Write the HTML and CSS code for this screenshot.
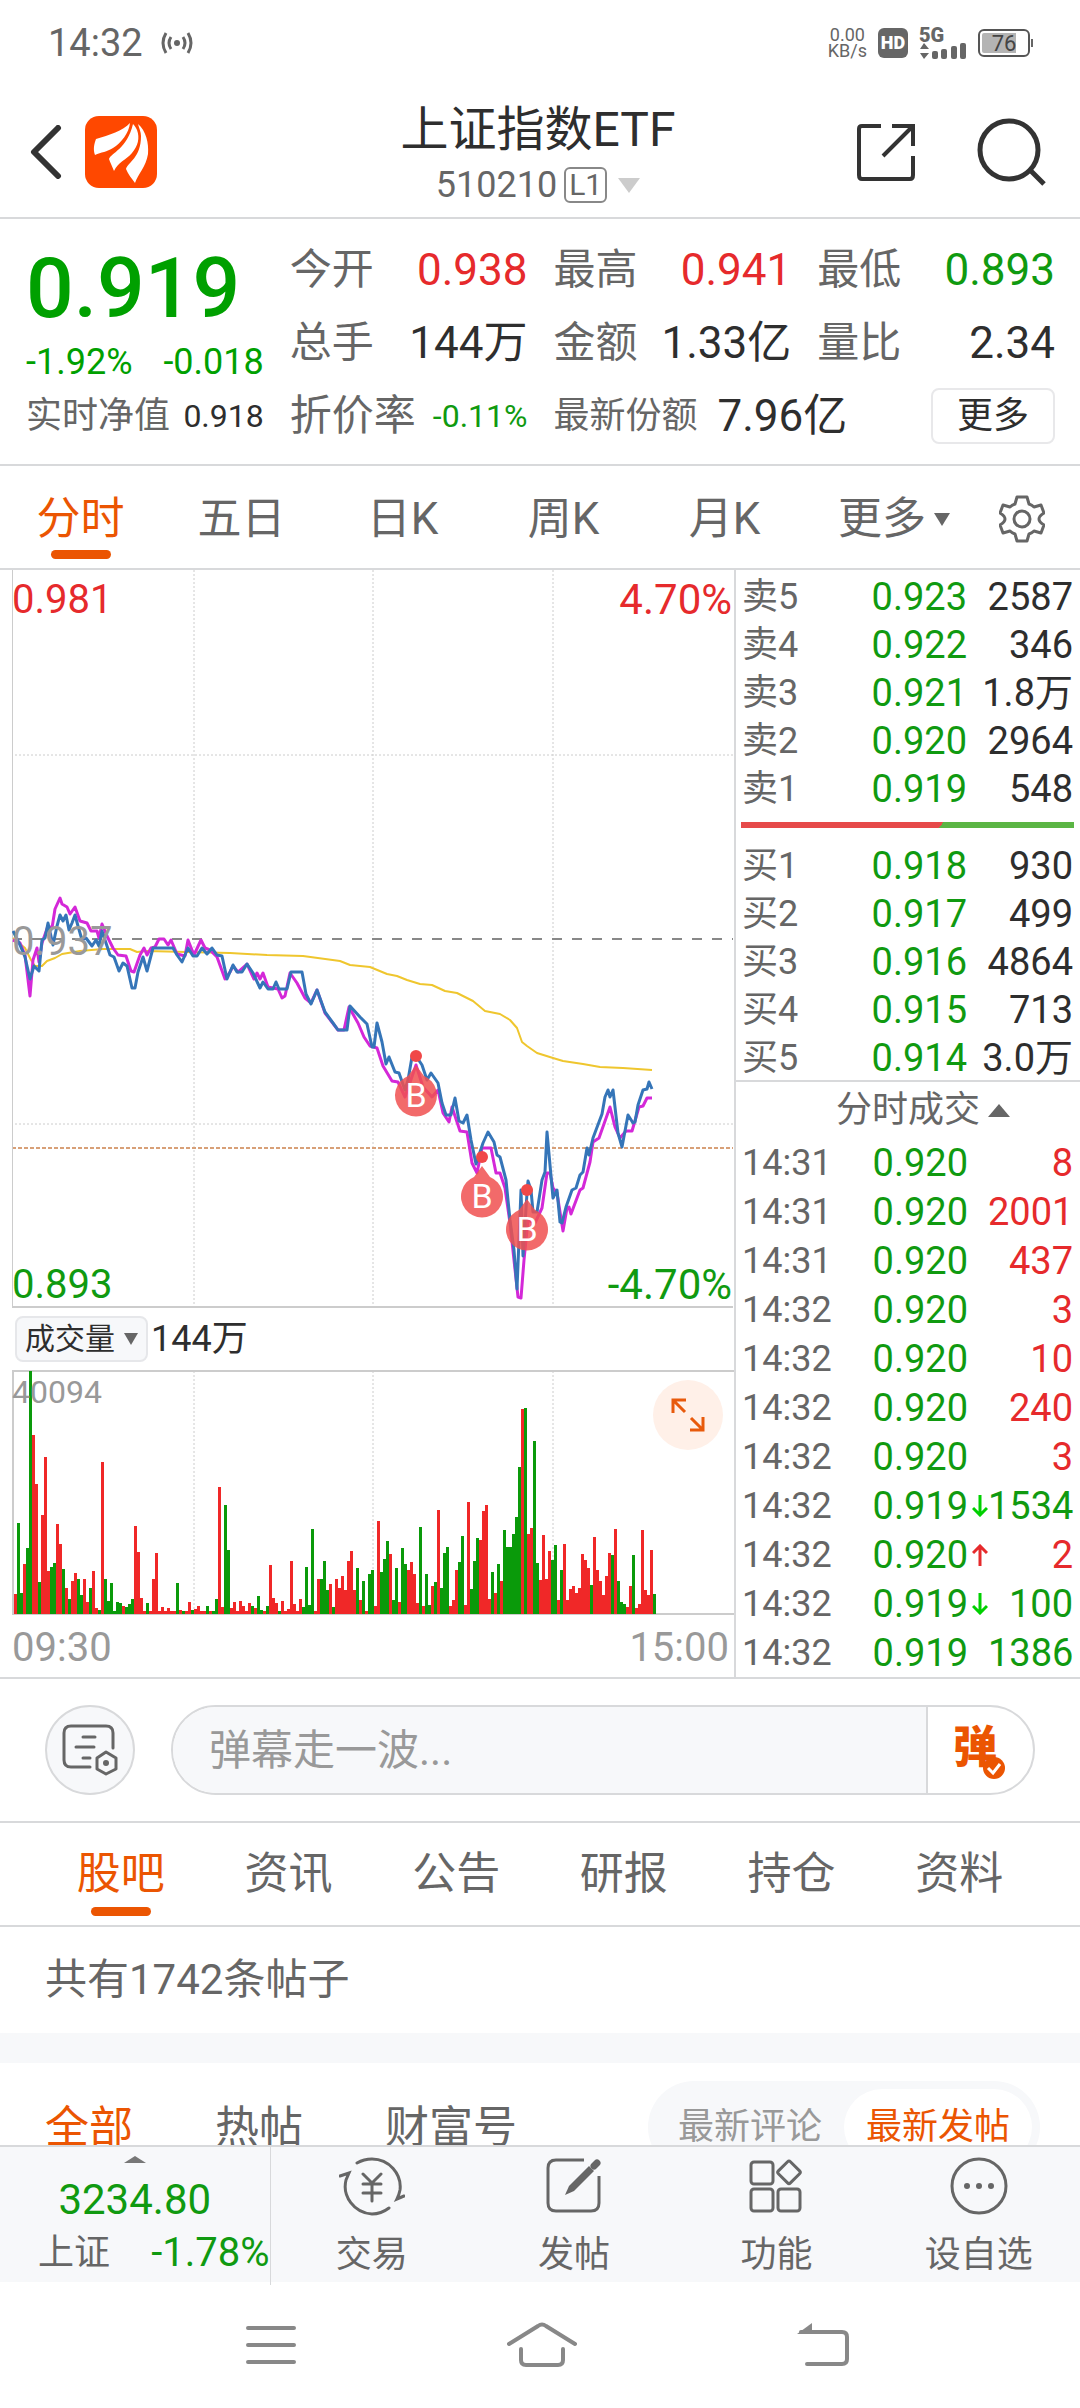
FILE: index.html
```html
<!DOCTYPE html>
<html lang="zh-CN">
<head>
<meta charset="utf-8">
<meta name="viewport" content="width=device-width, initial-scale=1">
<title>上证指数ETF 510210</title>
<link rel="stylesheet" href="styles.css">
</head>
<body>
<div class="status">
  <span class="status-time">14:32</span>
  <svg class="status-cast" width="32" height="22" viewBox="0 0 32 22" fill="none" stroke="#666" stroke-width="3"><circle cx="16" cy="11" r="3" fill="#666" stroke="none"/><path d="M10 5Q6 11 10 17M22 5Q26 11 22 17M5 1Q-1 11 5 21M27 1Q33 11 27 21"/></svg>
  <div class="status-right">
    <div class="status-net"><span>0.00</span><span>KB/s</span></div>
    <span class="status-hd">HD</span>
    <div class="status-signal">
      <span>5G</span>
      <svg width="48" height="16" viewBox="0 0 48 16" fill="#666"><path d="M1 6L5 0L10 6ZM1 10H10L5 16Z"/><rect x="13" y="8" width="6" height="8" rx="2"/><rect x="22" y="6" width="6" height="10" rx="2"/><rect x="32" y="3" width="6" height="13" rx="2"/><rect x="41" y="0" width="6" height="16" rx="2"/></svg>
    </div>
    <span class="status-battery">76</span>
  </div>
</div>

<header class="header">
  <div class="header-side">
    <button class="icon-btn" aria-label="返回"><svg width="32" height="54" viewBox="0 0 32 54" fill="none" stroke="#333" stroke-width="6" stroke-linecap="round" stroke-linejoin="round"><path d="M28 3L4 27L28 51"/></svg></button>
    <svg class="logo" width="72" height="72" viewBox="0 0 72 72"><rect width="72" height="72" rx="14" fill="#ff4800"/><g fill="#fff"><path d="M10 39C8 34 9 28 11 23C24 19 38 15 45 7C44 17 36 27 28 32C22 36 16 36 10 39Z"/><path d="M29 55C27 50 25 46 24 43C26 37 42 33 48 8C50 10 51 12 52 14C55 22 53 30 47 37C41 44 33 46 29 55Z"/><path d="M50 67C47 63 43 58 41 53C43 46 56 42 56 20C56 16 54 12 53 8C61 15 64 27 63 38C61 51 53 58 50 67Z"/></g></svg>
  </div>
  <div class="header-title">
    <h1>上证指数ETF</h1>
    <button class="code">510210<span class="level">L1</span><svg width="22" height="15" viewBox="0 0 22 15"><path d="M0 0H22L11 15Z" fill="#ccc"/></svg></button>
  </div>
  <div class="header-side header-actions">
    <button class="icon-btn" aria-label="分享"><svg width="60" height="60" viewBox="0 0 60 60" fill="none" stroke="#333" stroke-width="4"><path d="M25 4H6Q3 4 3 7V53Q3 57 6 57H54Q57 57 57 53V34M36 4H57V24M56 5L27 34"/></svg></button>
    <button class="icon-btn" aria-label="搜索"><svg width="70" height="70" viewBox="0 0 70 70" fill="none" stroke="#333" stroke-width="5"><circle cx="33" cy="33" r="29"/><path d="M54 53L68 67"/></svg></button>
  </div>
</header>

<section class="quote">
  <div class="quote-main">
    <strong>0.919</strong>
    <div class="quote-change"><span>-1.92%</span><span>-0.018</span></div>
  </div>
  <div class="stat"><span>今开</span><b class="up">0.938</b></div>
  <div class="stat"><span>最高</span><b class="up">0.941</b></div>
  <div class="stat"><span>最低</span><b class="down">0.893</b></div>
  <div class="stat"><span>总手</span><b>144万</b></div>
  <div class="stat"><span>金额</span><b>1.33亿</b></div>
  <div class="stat"><span>量比</span><b>2.34</b></div>
  <div class="stat"><span class="small">实时净值</span><b class="small-num">0.918</b></div>
  <div class="stat"><span>折价率</span><b class="small-num down">-0.11%</b></div>
  <div class="stat stat-wide"><span class="small">最新份额</span><b>7.96亿</b><button class="more">更多</button></div>
</section>

<nav class="periods">
  <button class="tab active">分时</button>
  <button class="tab">五日</button>
  <button class="tab">日K</button>
  <button class="tab">周K</button>
  <button class="tab">月K</button>
  <button class="tab tab-more">更多<svg width="16" height="13" viewBox="0 0 16 13"><path d="M0 0H16L8 13Z" fill="#666"/></svg></button>
  <button class="tab tab-gear" aria-label="设置"><svg width="46" height="48" viewBox="0 0 46 48" fill="none" stroke="#666" stroke-width="3" stroke-linejoin="round"><path d="M18 2H28L30 9Q33 10 35 12L42 10L45 18Q40 21 40 24Q40 27 45 30L42 38L35 36Q33 38 30 39L28 46H18L16 39Q13 38 11 36L4 38L1 30Q6 27 6 24Q6 21 1 18L4 10L11 12Q13 10 16 9Z"/><circle cx="23" cy="24" r="8"/></svg></button>
</nav>

<main class="content">
  <section class="market">
    <div class="charts">
      <div class="plot">
        <svg class="plot-svg" viewBox="12 570 722 738" fill="none">
          <g stroke="#ccc" stroke-dasharray="2 2"><path d="M194 570V1307M373 570V1307M553 570V1307M15 755H733M15 1124H733"/></g>
          <path d="M12 939H733" stroke="#888" stroke-width="2" stroke-dasharray="10 10"/>
          <path d="M12 1148H733" stroke="#d8a078" stroke-width="2" stroke-dasharray="4 2"/>
          <path d="M12 570V1307H733" stroke="#ccc" stroke-width="2"/>
          <g stroke-linejoin="round">
          <polyline stroke="#efc62e" stroke-width="2" points="13,938 25,948 31,960 35,966 42,966 47,961 55,958 62,954 80,951 103,949 130,949 137,952 147,951 187,952 230,953 267,955 303,956 340,961 350,965 370,967 387,974 397,976 407,980 420,984 432,985 445,991 457,993 473,1001 485,1011 500,1014 510,1020 517,1028 522,1042 527,1046 537,1053 553,1058 563,1061 583,1064 600,1067 623,1068 652,1070"/>
          <polyline stroke="#d428d8" stroke-width="3" points="13,940 20,943 25,955 30,996 33,960 37,948 39,962 42,943 48,926 52,928 55,909 60,898 62,904 67,907 70,914 75,907 80,921 87,923 91,931 97,931 99,938 102,924 107,936 113,948 118,955 126,956 131,971 134,972 140,955 144,948 147,955 151,948 155,947 159,939 164,939 168,945 171,940 177,954 185,956 188,940 194,955 201,940 205,948 210,950 217,957 225,979 230,972 233,966 238,972 247,964 254,979 257,973 260,979 263,973 268,987 278,989 282,998 285,996 290,973 297,983 305,998 311,1003 317,990 325,1013 338,1030 344,1030 349,1007 358,1023 364,1037 370,1046 377,1048 383,1066 392,1081 398,1082 405,1097 416,1065 423,1087 432,1097 438,1090 443,1113 449,1122 452,1107 460,1131 467,1132 472,1163 477,1173 482,1148 491,1148 496,1173 500,1173 505,1188 510,1223 518,1297 521,1298 524,1260 528,1220 535,1223 542,1208 547,1173 550,1173 553,1188 557,1193 563,1231 567,1208 569,1207 571,1214 580,1190 583,1188 590,1162 593,1142 599,1138 610,1107 615,1127 620,1138 626,1131 632,1131 639,1107 643,1106 647,1098 652,1098"/>
          <polyline stroke="#3575b8" stroke-width="3" points="13,931 20,945 25,957 30,979 34,966 39,971 42,940 45,938 48,923 53,945 57,926 60,915 63,921 66,915 69,930 72,923 75,915 78,926 82,940 86,938 92,946 96,940 99,946 102,931 106,943 110,955 114,957 119,971 123,963 127,966 132,988 135,988 138,972 143,957 147,971 153,948 173,948 177,955 182,962 188,948 193,956 197,956 202,948 207,954 212,948 217,955 222,956 227,979 233,965 237,972 242,972 247,964 253,973 260,988 263,982 268,989 273,989 276,982 279,989 287,989 291,972 302,972 306,994 311,1004 317,990 325,1012 333,1023 338,1030 347,1030 350,1006 360,1017 367,1024 372,1047 374,1047 377,1023 382,1042 386,1064 389,1057 395,1072 399,1073 405,1090 408,1080 412,1057 416,1056 422,1065 427,1080 431,1073 438,1083 442,1103 446,1115 451,1115 455,1098 459,1121 463,1123 467,1115 471,1140 476,1164 480,1152 483,1143 488,1132 494,1142 497,1155 500,1157 506,1180 510,1220 514,1250 517,1289 521,1190 523,1256 527,1193 528,1181 531,1190 533,1212 537,1212 542,1180 545,1172 547,1132 553,1198 557,1190 560,1222 562,1223 566,1207 572,1190 576,1188 580,1175 583,1172 587,1148 589,1155 593,1138 602,1114 605,1097 608,1090 610,1097 613,1090 618,1133 622,1147 628,1115 633,1123 635,1122 638,1105 643,1090 647,1089 649,1082 652,1089"/>
          </g>
          <g id="marks"></g>
        </svg>
        <span class="mark-label top-left up">0.981</span>
        <span class="mark-label top-right up">4.70%</span>
        <span class="mark-label mid-left">0.937</span>
        <span class="mark-label bottom-left down">0.893</span>
        <span class="mark-label bottom-right down">-4.70%</span>
      </div>
      <div class="indicator">
        <button class="indicator-btn">成交量<svg width="14" height="12" viewBox="0 0 14 12"><path d="M0 0H14L7 12Z" fill="#666"/></svg></button>
        <span>144万</span>
      </div>
      <div class="plot">
        <svg class="plot-svg" viewBox="12 1370 722 245" fill="none">
          <path d="M194 1371V1614M373 1371V1614M553 1371V1614" stroke="#ccc" stroke-dasharray="2 2"/>
          <path d="M734 1371H13V1614H734" stroke="#ccc" stroke-width="2"/>
          <g id="bars"></g>
        </svg>
        <span class="volume-max">40094</span>
        <button class="expand" aria-label="全屏"><svg width="38" height="38" viewBox="0 0 38 38" fill="none" stroke="#e85a0c" stroke-width="3"><path d="M4 17V4H17M4 4L16 16M34 21V34H21M34 34L22 22"/></svg></button>
      </div>
      <div class="axis"><span>09:30</span><span>15:00</span></div>
    </div>
    <aside class="book">
      <table class="orders">
        <tr><th>卖5</th><td class="down">0.923</td><td>2587</td></tr>
        <tr><th>卖4</th><td class="down">0.922</td><td>346</td></tr>
        <tr><th>卖3</th><td class="down">0.921</td><td>1.8万</td></tr>
        <tr><th>卖2</th><td class="down">0.920</td><td>2964</td></tr>
        <tr><th>卖1</th><td class="down">0.919</td><td>548</td></tr>
      </table>
      <div class="ratio"></div>
      <table class="orders">
        <tr><th>买1</th><td class="down">0.918</td><td>930</td></tr>
        <tr><th>买2</th><td class="down">0.917</td><td>499</td></tr>
        <tr><th>买3</th><td class="down">0.916</td><td>4864</td></tr>
        <tr><th>买4</th><td class="down">0.915</td><td>713</td></tr>
        <tr><th>买5</th><td class="down">0.914</td><td>3.0万</td></tr>
      </table>
      <button class="deals-title">分时成交<svg width="22" height="13" viewBox="0 0 22 13"><path d="M0 13H22L11 0Z" fill="#666"/></svg></button>
      <table class="deals">
        <colgroup><col class="c-time"><col><col class="c-arrow"><col class="c-vol"></colgroup>
        <tr><th>14:31</th><td class="down">0.920</td><td></td><td class="up">8</td></tr>
        <tr><th>14:31</th><td class="down">0.920</td><td></td><td class="up">2001</td></tr>
        <tr><th>14:31</th><td class="down">0.920</td><td></td><td class="up">437</td></tr>
        <tr><th>14:32</th><td class="down">0.920</td><td></td><td class="up">3</td></tr>
        <tr><th>14:32</th><td class="down">0.920</td><td></td><td class="up">10</td></tr>
        <tr><th>14:32</th><td class="down">0.920</td><td></td><td class="up">240</td></tr>
        <tr><th>14:32</th><td class="down">0.920</td><td></td><td class="up">3</td></tr>
        <tr><th>14:32</th><td class="down">0.919</td><td><svg width="16" height="22" viewBox="0 0 16 22" fill="none" stroke="#00d000" stroke-width="3"><path d="M8 0V20M1 13L8 20L15 13"/></svg></td><td class="down">1534</td></tr>
        <tr><th>14:32</th><td class="down">0.920</td><td><svg width="16" height="22" viewBox="0 0 16 22" fill="none" stroke="#e62a2c" stroke-width="3"><path d="M8 22V2M1 9L8 2L15 9"/></svg></td><td class="up">2</td></tr>
        <tr><th>14:32</th><td class="down">0.919</td><td><svg width="16" height="22" viewBox="0 0 16 22" fill="none" stroke="#00d000" stroke-width="3"><path d="M8 0V20M1 13L8 20L15 13"/></svg></td><td class="down">100</td></tr>
        <tr><th>14:32</th><td class="down">0.919</td><td></td><td class="down">1386</td></tr>
      </table>
    </aside>
  </section>

  <section class="danmu">
    <button class="danmu-set" aria-label="弹幕设置"><svg width="56" height="52" viewBox="0 0 56 52" fill="none" stroke="#666" stroke-width="3" stroke-linecap="round"><path d="M28 43H9Q2 43 2 36V9Q2 2 9 2H44Q51 2 51 9V24M21 13H33M14 23H32M21 34H28"/><path d="M44 28L54 34V45L44 50L35 45V34Z" stroke-linejoin="round"/><circle cx="44" cy="39" r="3" fill="#666" stroke="none"/></svg></button>
    <div class="danmu-box">
      <input type="text" placeholder="弹幕走一波..." aria-label="弹幕">
      <button class="danmu-toggle"><span>弹</span><svg width="22" height="22" viewBox="0 0 22 22"><circle cx="11" cy="11" r="11" fill="#eb5502"/><path d="M5 11L10 16L17 7" fill="none" stroke="#fff" stroke-width="3"/></svg></button>
    </div>
  </section>

  <nav class="sections">
    <button class="tab active">股吧</button>
    <button class="tab">资讯</button>
    <button class="tab">公告</button>
    <button class="tab">研报</button>
    <button class="tab">持仓</button>
    <button class="tab">资料</button>
  </nav>
  <p class="count">共有1742条帖子</p>
  <div class="filters">
    <button class="filter active">全部</button>
    <button class="filter">热帖</button>
    <button class="filter">财富号</button>
    <div class="sort"><button>最新评论</button><button class="active">最新发帖</button></div>
  </div>
</main>

<footer class="bottom">
  <div class="index">
    <svg width="22" height="7" viewBox="0 0 22 7"><path d="M0 7H22L11 0Z" fill="#777"/></svg>
    <strong>3234.80</strong>
    <div><span>上证</span><b>-1.78%</b></div>
  </div>
  <a class="action" href="#"><svg width="66" height="60" viewBox="0 0 66 60" fill="none" stroke="#666" stroke-width="3" stroke-linecap="round"><path d="M18 7Q25 3 33 3C50 3 63 18 61 34Q60 39 58 43L65 40M50 52Q42 58 33 58C15 57 3 40 7 24L10 17L1 20M24 18L33 27L42 18M33 27V45M24 28H42M24 37H42"/></svg>交易</a>
  <a class="action" href="#"><svg width="56" height="56" viewBox="0 0 56 56" fill="none" stroke="#666" stroke-width="3"><path d="M38 2H10Q2 2 2 10V45Q2 53 10 53H45Q53 53 53 45V18"/><path d="M19 37L23 28L43 8L48 13L28 33Z" fill="#666" stroke="none"/><path d="M48 8L51 5" stroke-width="7" stroke-linecap="round"/></svg>发帖</a>
  <a class="action" href="#"><svg width="54" height="54" viewBox="0 0 54 54" fill="none" stroke="#666" stroke-width="3"><rect x="2" y="3" width="22" height="22" rx="3"/><rect x="2" y="30" width="22" height="22" rx="3"/><rect x="29" y="30" width="22" height="22" rx="3"/><rect x="31" y="5" width="17" height="17" rx="2" transform="rotate(45 40 14)"/></svg>功能</a>
  <a class="action" href="#"><svg width="58" height="58" viewBox="0 0 58 58" fill="none" stroke="#666" stroke-width="3"><circle cx="29" cy="29" r="27"/><g fill="#666" stroke="none"><circle cx="17" cy="29" r="3"/><circle cx="29" cy="29" r="3"/><circle cx="41" cy="29" r="3"/></g></svg>设自选</a>
</footer>

<nav class="system">
  <button class="icon-btn" aria-label="最近任务"><svg width="50" height="42" viewBox="0 0 50 42" stroke="#888" stroke-width="4" stroke-linecap="round"><path d="M2 4H48M2 21H48M2 38H48"/></svg></button>
  <button class="icon-btn" aria-label="主页"><svg width="70" height="46" viewBox="0 0 70 46" fill="none" stroke="#888" stroke-width="4" stroke-linecap="round"><path d="M2 22L31 4Q35 1 39 4L68 22M14 27V38Q14 43 19 43H51Q56 43 56 38V27"/></svg></button>
  <button class="icon-btn" aria-label="返回上一页"><svg width="62" height="44" viewBox="-10 0 62 44" fill="none" stroke="#888" stroke-width="4" stroke-linecap="round"><path d="M4 9H45Q50 9 50 14V36Q50 41 45 41H10"/><path d="M15 0V11H0Z" fill="#888" stroke="none"/></svg></button>
</nav>
<script src="app.js"></script>
</body>
</html>
```
FILE: styles.css
```css
* { box-sizing: border-box; }
body {
  margin: 0;
  height: 100vh;
  display: flex;
  flex-direction: column;
  background: #fff;
  color: #2e2e2e;
  font-family: Roboto, "Noto Sans CJK SC", sans-serif;
  font-size: 36px;
  line-height: 1;
  white-space: nowrap;
}
button, input {
  font: inherit;
  color: inherit;
  background: none;
  border: 0;
  padding: 0;
  margin: 0;
}
h1, p { margin: 0; font-weight: 400; }
b, th { font-weight: 400; }
svg { display: block; flex: none; }
a { color: inherit; text-decoration: none; }
.icon-btn { display: flex; align-items: center; }
.up { color: #e62a2c; }
.down { color: #109a10; }

/* status bar */
.status {
  display: flex;
  align-items: center;
  height: 86px;
  flex: none;
  padding: 0 50px 0 48px;
  color: #666;
}
.status-time { font-size: 38px; }
.status-cast { margin-left: 18px; }
.status-right { margin-left: auto; display: flex; align-items: center; gap: 11px; }
.status-net { display: flex; flex-direction: column; font-size: 18px; line-height: 16px; align-items: center; }
.status-hd {
  width: 30px;
  height: 30px;
  border-radius: 6px;
  background: #666;
  color: #fff;
  font-size: 18px;
  font-weight: 900;
  line-height: 30px;
  text-align: center;
}
.status-signal { font-size: 20px; font-weight: 900; line-height: 15px; }
.status-battery {
  position: relative;
  width: 52px;
  height: 28px;
  border: 2px solid #555;
  border-radius: 6px;
  background: linear-gradient(90deg, #b4b4b4 34px, #fff 34px) content-box;
  padding: 2px;
  font-size: 22px;
  line-height: 21px;
  text-align: center;
  color: #444;
}
.status-battery::after {
  content: "";
  position: absolute;
  right: -5px;
  top: 8px;
  width: 2px;
  height: 8px;
  background: #666;
}

/* header */
.header {
  display: grid;
  grid-template-columns: 1fr auto 1fr;
  align-items: center;
  height: 133px;
  flex: none;
  padding: 0 34px 0 30px;
  border-bottom: 2px solid #d8d9db;
}
.header-side { display: flex; align-items: center; gap: 23px; }
.header-actions { justify-content: flex-end; gap: 60px; }
.header-title { display: flex; flex-direction: column; align-items: center; gap: 12px; padding-top: 5px; }
.header-title h1 { font-size: 48px; line-height: 50px; }
.code { display: flex; align-items: center; color: #666; }
.level {
  margin: 0 11px 0 7px;
  border: 2px solid #888;
  border-radius: 6px;
  padding: 0 3px;
  font-size: 30px;
  line-height: 32px;
}

/* quote */
.quote {
  display: grid;
  grid-template-columns: repeat(4, minmax(0, 1fr));
  grid-auto-rows: 73px;
  column-gap: 26px;
  flex: none;
  padding: 14px 25px 12px 26px;
  border-bottom: 2px solid #d8d9db;
}
.quote-main { grid-row: span 2; color: #00a000; padding-top: 10px; }
.quote-main strong { display: block; font-size: 84px; font-weight: 500; line-height: 92px; }
.quote-change { display: flex; justify-content: space-between; font-size: 36px; line-height: 54px; }
.stat { display: flex; align-items: center; justify-content: space-between; font-size: 42px; }
.stat span { color: #666; }
.stat b { font-size: 44px; }
.stat .small { font-size: 36px; }
.stat .small-num { font-size: 32px; }
.stat-wide { grid-column: span 2; justify-content: flex-start; }
.stat-wide b { margin-left: 20px; }
.more {
  margin-left: auto;
  width: 124px;
  height: 56px;
  border: 2px solid #e8e8ea;
  border-radius: 8px;
  font-size: 36px;
}

/* tab rows */
.periods, .sections { display: grid; flex: none; height: 104px; border-bottom: 2px solid #d8d9db; }
.periods { grid-template-columns: repeat(5, 161fr) 178fr 97fr; }
.sections { grid-template-columns: repeat(6, 1fr); padding: 0 37px; }
.tab {
  position: relative;
  display: flex;
  align-items: center;
  justify-content: center;
  font-size: 44px;
  color: #666;
}
.periods .tab { padding-top: 4px; }
.tab.active, .filter.active { color: #eb5502; }
.tab.active::after {
  content: "";
  position: absolute;
  left: 50%;
  bottom: 9px;
  width: 60px;
  height: 9px;
  margin-left: -30px;
  border-radius: 5px;
  background: #eb5502;
}
.tab-more { gap: 8px; }
.tab-gear { padding-right: 20px; }

.content { flex: 1 1 0; min-height: 0; overflow: hidden; }

/* charts */
.market {
  display: grid;
  grid-template-columns: 734fr 346fr;
  border-bottom: 2px solid #d8d9db;
}
.charts { padding-left: 12px; min-width: 0; }
.plot { position: relative; }
.plot-svg { width: 100%; height: auto; }
.mark-label { position: absolute; font-size: 40px; }
.top-left { left: 0; top: 10px; }
.top-right { right: 2px; top: 9px; font-size: 42px; }
.mid-left { left: 0; top: 352px; color: #999; }
.bottom-left { left: 0; bottom: 3px; }
.bottom-right { right: 2px; bottom: 2px; font-size: 42px; }
.buy-mark { fill: #f05050; fill-opacity: .85; }
.buy-dot { fill: #f04848; }
.buy-text { fill: #fff; font-size: 34px; text-anchor: middle; }
.indicator { display: flex; align-items: center; gap: 3px; height: 62px; padding-left: 3px; }
.indicator-btn {
  display: flex;
  align-items: center;
  gap: 9px;
  height: 46px;
  padding: 0 8px;
  border: 2px solid #e6e7ea;
  border-radius: 8px;
  background: #f7f8fa;
  font-size: 30px;
}
.volume-max { position: absolute; left: 0; top: 6px; font-size: 32px; color: #999; }
.expand {
  position: absolute;
  right: 11px;
  top: 10px;
  width: 70px;
  height: 70px;
  border-radius: 50%;
  background: #fff0e8;
  display: flex;
  align-items: center;
  justify-content: center;
}
.axis { display: flex; justify-content: space-between; padding-right: 5px; line-height: 66px; height: 62px; font-size: 40px; color: #999; }

/* order book */
.book { border-left: 2px solid #d8d9db; }
table { width: 100%; border-collapse: collapse; table-layout: fixed; }
th, td { padding: 0; text-align: right; font-size: 38px; }
th { text-align: left; font-size: 36px; color: #666; }
.orders tr { height: 48px; }
.orders th { width: 68px; padding-left: 6px; }
.orders td:last-child { width: 113px; padding-right: 7px; }
.orders:first-child { margin-top: 3px; }
.ratio {
  height: 6px;
  margin: 9px 6px 14px 5px;
  background: linear-gradient(125deg, #e64a4a 60%, #5bb544 60%);
}
.deals-title {
  display: flex;
  align-items: center;
  justify-content: center;
  gap: 8px;
  width: 100%;
  height: 58px;
  margin-top: -2px;
  border-top: 2px solid #d8d9db;
  padding-left: 30px;
  color: #666;
}
.deals tr { height: 49px; }
.deals th { padding-left: 6px; }
.deals td:last-child { padding-right: 7px; }
.c-time { width: 103px; }
.c-arrow { width: 20px; }
.c-vol { width: 92px; }
.deals td svg { margin-left: auto; }

/* comment box */
.danmu {
  display: flex;
  align-items: center;
  gap: 36px;
  height: 144px;
  padding: 0 45px;
  border-bottom: 2px solid #d8d9db;
}
.danmu-set {
  width: 90px;
  height: 90px;
  flex: none;
  border: 2px solid #d8d9db;
  border-radius: 50%;
  background: #f7f8fa;
  display: flex;
  align-items: center;
  justify-content: center;
}
.danmu-box {
  flex: 1;
  display: flex;
  height: 90px;
  border: 2px solid #d8d9db;
  border-radius: 45px;
  overflow: hidden;
}
.danmu-box input {
  flex: 1;
  min-width: 0;
  background: #f7f8fa;
  padding-left: 36px;
  font-size: 42px;
}
.danmu-box input::placeholder { color: #999; opacity: 1; }
.danmu-toggle {
  width: 107px;
  border-left: 2px solid #d8d9db;
  padding-left: 25px;
  display: flex;
  align-items: center;
  color: #eb5502;
}
.danmu-toggle span { font-size: 44px; font-weight: 900; line-height: 50px; padding-bottom: 4px; }
.danmu-toggle svg { align-self: flex-end; margin: 0 0 14px -14px; }

/* posts */
.count { padding-left: 45px; font-size: 42px; line-height: 106px; color: #666; border-bottom: 30px solid #f7f8fa; }
.filters { display: flex; align-items: flex-start; padding: 18px 40px 0 45px; gap: 82px; }
.filter { font-size: 44px; line-height: 94px; color: #666; }
.sort { display: flex; margin-left: auto; height: 92px; padding: 8px; border-radius: 46px; background: #f7f8fa; }
.sort button { padding: 0 22px; color: #999; }
.sort .active { background: #fff; border-radius: 38px; color: #eb5502; }

/* bottom bar */
.bottom {
  display: grid;
  grid-template-columns: 270fr repeat(4, 202fr);
  height: 137px;
  flex: none;
  border-top: 2px solid #d8d9db;
  background: #f7f8fa;
  color: #666;
}
.index {
  display: flex;
  flex-direction: column;
  align-items: center;
  border-right: 1px solid #d8d9db;
  padding-top: 9px;
  color: #109a10;
}
.index strong { font-size: 42px; font-weight: 400; line-height: 74px; }
.index div { display: flex; justify-content: space-between; width: 100%; padding-left: 38px; line-height: 32px; }
.index div span { color: #666; }
.index div b { font-size: 40px; }
.action { display: grid; grid-template-rows: 78px 60px; justify-items: center; align-items: center; }

/* system navigation */
.system {
  display: flex;
  align-items: center;
  justify-content: space-between;
  height: 126px;
  flex: none;
  padding: 0 231px 0 246px;
}
```
FILE: app.js
```js
const SVG = "http://www.w3.org/2000/svg";
function add(parent, tag, attrs, text) {
  const el = document.createElementNS(SVG, tag);
  for (const k in attrs) el.setAttribute(k, attrs[k]);
  if (text) el.textContent = text;
  parent.appendChild(el);
}

// one entry per minute: colour letter (r up, g down) and bar height
const volumes = ("r20 g91 g21 r50 g66 g243 r179 r130 g32 r99 r157 r43 g47 g51 r90 r70 g45 r26 g15 r33 r41 g35 g19 r35 r12 g26 r43 r6 g4 r152 " +
  "g35 g13 g31 g3 g12 g11 r8 g7 g10 g15 r88 r62 r16 r3 g11 r3 r35 r61 r3 r7 r3 r6 r3 r3 g31 r4 g3 r3 r12 g4 " +
  "r5 r8 r3 r3 g8 r3 g3 g15 r127 r7 g109 g64 r6 r12 r3 r13 r8 r3 r11 g8 r6 g18 g4 r3 g8 r49 r16 r11 g3 r13 " +
  "r3 r5 r53 r10 r3 r15 g7 g47 g9 g85 r3 r35 g35 g53 g24 r30 g7 r35 r26 r38 r24 r53 r63 r24 g46 r14 g33 r3 g40 g44 " +
  "r8 r93 g42 g55 g73 r60 g14 g46 r12 g66 g50 r44 r52 r40 r11 g87 r8 g40 g9 r28 g32 r104 g26 g61 g67 r8 r14 r44 g52 g78 " +
  "r9 r112 g25 g53 g76 r74 r103 r109 r15 g42 r21 g50 r33 g84 g67 g67 g80 g97 g147 r205 g206 r80 r86 g173 g51 r34 r79 r35 r63 g54 " +
  "g69 r14 g44 r70 r14 r25 r28 r21 r26 r60 r54 r46 g29 r77 r44 r33 r19 r38 r61 g59 r85 g33 g12 g10 r7 r28 g59 r6 r10 r84 r24 r19 r64 g20").split(" ");
const bars = document.getElementById("bars");
volumes.forEach((v, i) => {
  const h = Number(v.slice(1));
  add(bars, "rect", { x: 14 + 3 * i, y: 1614 - h, width: 3, height: h, fill: v[0] === "r" ? "#f02828" : "#0a9a0a" });
});

// buy points on the price line
const marks = document.getElementById("marks");
[[416, 1056], [482, 1157], [527, 1190]].forEach(([x, y]) => {
  add(marks, "path", { class: "buy-mark", d: `M${x} ${y + 9}L${x + 8} ${y + 20}A21 21 0 1 1 ${x - 8} ${y + 20}Z` });
  add(marks, "circle", { class: "buy-dot", cx: x, cy: y, r: 6 });
  add(marks, "text", { class: "buy-text", x, y: y + 51 }, "B");
});
```
